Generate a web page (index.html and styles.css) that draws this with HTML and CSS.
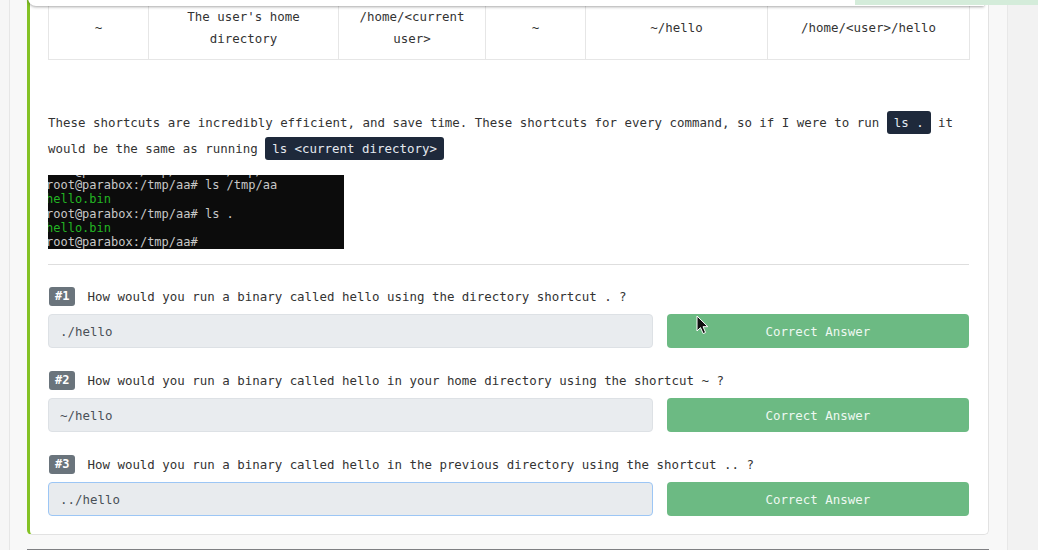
FILE: index.html
```html
<!DOCTYPE html>
<html lang="en">
<head>
<meta charset="utf-8">
<title>Shortcuts</title>
<link rel="stylesheet" href="styles.css">
</head>
<body>
<div class="topbar"></div>
<div class="topgreen"></div>
<div class="layout">
  <div class="gutter"></div>
  <main class="main">
    <section class="card">
      <table class="shortcuts">
        <tr>
          <td class="c1">~</td>
          <td class="c2">The user's home directory</td>
          <td class="c3">/home/&lt;current user&gt;</td>
          <td class="c4">~</td>
          <td class="c5">~/hello</td>
          <td class="c6">/home/&lt;user&gt;/hello</td>
        </tr>
      </table>

      <p class="text">These shortcuts are incredibly efficient, and save time. These shortcuts for every command, so if I were to run <code class="code">ls .</code> it would be the same as running <code class="code">ls &lt;current directory&gt;</code></p>

      <div class="terminal">
        <div class="term-lines">
          <div class="t-gray">root@parabox:/tmp/aa# cd /tmp/aa</div>
          <div class="t-gray">root@parabox:/tmp/aa# ls /tmp/aa</div>
          <div class="t-green">hello.bin</div>
          <div class="t-gray">root@parabox:/tmp/aa# ls .</div>
          <div class="t-green">hello.bin</div>
          <div class="t-gray">root@parabox:/tmp/aa#</div>
        </div>
      </div>

      <hr class="rule">

      <div class="question">
        <div class="q-head"><span class="badge">#1</span><span class="q-text">How would you run a binary called hello using the directory shortcut . ?</span></div>
        <div class="answer-row">
          <input class="answer" type="text" value="./hello" readonly>
          <button class="btn-correct" type="button">Correct Answer</button>
        </div>
      </div>

      <div class="question">
        <div class="q-head"><span class="badge">#2</span><span class="q-text">How would you run a binary called hello in your home directory using the shortcut ~ ?</span></div>
        <div class="answer-row">
          <input class="answer" type="text" value="~/hello" readonly>
          <button class="btn-correct" type="button">Correct Answer</button>
        </div>
      </div>

      <div class="question">
        <div class="q-head"><span class="badge">#3</span><span class="q-text">How would you run a binary called hello in the previous directory using the shortcut .. ?</span></div>
        <div class="answer-row">
          <input class="answer focused" type="text" value="../hello" readonly>
          <button class="btn-correct" type="button">Correct Answer</button>
        </div>
      </div>
    </section>
    <section class="next-card"></section>
  </main>
  <aside class="side"></aside>
</div>
<svg class="cursor" width="13" height="20" viewBox="0 0 13 20" aria-hidden="true">
  <path d="M1 1 L1 16 L4.5 12.6 L7.2 18.6 L9.6 17.5 L7 11.7 L11.8 11.7 Z" fill="#111" stroke="#fff" stroke-width="1" stroke-linejoin="round"/>
</svg>
</body>
</html>
```

FILE: styles.css
```css
* { box-sizing: border-box; }

html, body {
  margin: 0;
  height: 550px;
  overflow: hidden;
}

body {
  background: #f4f4f4;
  font-family: "DejaVu Sans Mono", "Liberation Mono", monospace;
  font-size: 12.45px;
  color: #333;
  position: relative;
}

.layout {
  display: flex;
  min-height: 550px;
}

.gutter {
  width: 10px;
  flex: none;
  background: #f6f6f6;
  border-right: 1px solid #e6e6e6;
}

.main {
  width: 998px;
  flex: none;
  padding: 0 18px 0 17px;
  background: #f8f8f8;
  border-right: 1px solid #e8e8e8;
}

.side {
  flex: 1;
  background: #f2f2f2;
}

.card {
  margin-top: -5px;
  background: #fff;
  border-left: 3px solid #84c225;
  border-right: 1px solid #e2e2e2;
  border-bottom: 1px solid #e2e2e2;
  border-radius: 0 0 5px 5px;
  padding: 0 19px 18px 18px;
}

.shortcuts {
  border-collapse: collapse;
  width: 921px;
  table-layout: fixed;
}

.shortcuts td {
  border: 1px solid #e6e6e6;
  text-align: center;
  vertical-align: middle;
  line-height: 22px;
  padding: 10px 12px 9px;
  color: #333;
}

.c1 { width: 100px; }
.c2 { width: 190px; }
.c3 { width: 147px; }
.c4 { width: 100px; }
.c5 { width: 182px; }
.c6 { width: 202px; }

.text {
  margin: 50px 0 0;
  line-height: 26px;
  color: #333;
}

.code {
  font-family: inherit;
  font-size: 12.45px;
  background: #1e293b;
  color: #e5e9f0;
  padding: 4px 7px;
  border-radius: 3px;
}

.terminal {
  margin-top: 13px;
  width: 296px;
  height: 74px;
  background: #0c0c0c;
  overflow: hidden;
}

.term-lines {
  margin: -11px 0 0 -2px;
  font-size: 12px;
  line-height: 14.2px;
}

.term-lines div { white-space: pre; }

.t-gray { color: #c8c8c8; }
.t-green { color: #23b523; }

.rule {
  margin: 15px 0 0;
  border: 0;
  border-top: 1px solid #dedede;
  height: 0;
}

.question { margin-top: 23px; }
.rule + .question { margin-top: 22px; }

.q-head {
  display: flex;
  align-items: center;
  gap: 12px;
  height: 19px;
}

.badge {
  display: inline-block;
  height: 19px;
  line-height: 19px;
  padding: 0 6px;
  margin-left: 1px;
  background: #6a747c;
  color: #fff;
  font-weight: bold;
  font-size: 12px;
  border-radius: 3px;
}

.q-text { color: #333; }

.answer-row {
  margin-top: 8px;
  display: grid;
  grid-template-columns: 2fr 1fr;
  gap: 14px;
}

.answer {
  height: 34px;
  width: 100%;
  margin: 0;
  padding: 0 11px;
  font-family: inherit;
  font-size: 12.45px;
  color: #495057;
  background: #e9ecef;
  border: 1px solid #dde1e5;
  border-radius: 4px;
  outline: none;
}

.answer.focused {
  border-color: #9cc6f5;
  background: #e8ebee;
}

.btn-correct {
  height: 34px;
  margin: 0;
  border: 0;
  border-radius: 4px;
  background: #6cba83;
  color: #eef8f1;
  font-family: inherit;
  font-size: 12.45px;
}

.next-card {
  margin-top: 14px;
  height: 40px;
  background: #fff;
  border-top: 2px solid #7f8083;
}

.topbar {
  position: absolute;
  top: -20px;
  left: 28px;
  width: 956px;
  height: 26px;
  background: #fff;
  border-radius: 0 0 0 8px;
  box-shadow: 0 1px 3px rgba(0, 0, 0, 0.35);
  z-index: 3;
}

.topgreen {
  position: absolute;
  top: 0;
  left: 855px;
  right: 0;
  height: 5px;
  background: #d4ecda;
  z-index: 4;
}

.cursor {
  position: absolute;
  left: 696px;
  top: 315px;
  z-index: 5;
}
```
